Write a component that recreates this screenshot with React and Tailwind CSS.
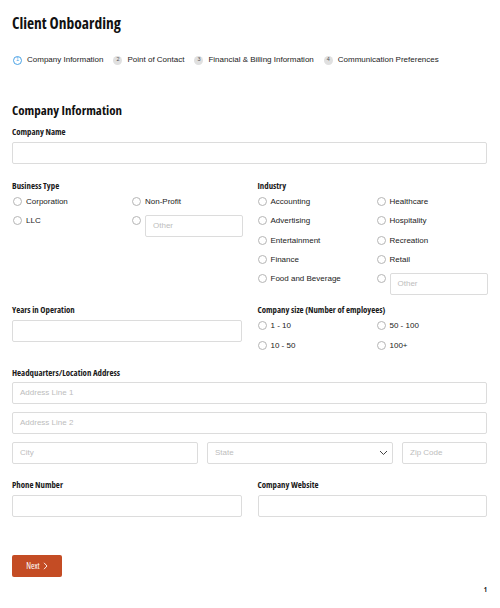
import React from "react";

const cond = "font-['Open_Sans',sans-serif] [font-stretch:75%] font-bold";
const body = "font-['Liberation_Sans',Arial,sans-serif]";

function Radio({ label }) {
  return (
    <div className="flex items-start h-[19.25px]">
      <span className="mt-[5px] w-[9px] h-[9px] rounded-full border border-[#b5b5b5] bg-white shrink-0" />
      <span className={`${body} ml-[4px] text-[8px] leading-[19px] text-[#222]`}>{label}</span>
    </div>
  );
}

function RadioOther() {
  return (
    <div className="flex items-start h-[19.25px]">
      <span className="mt-[5px] w-[9px] h-[9px] rounded-full border border-[#b5b5b5] bg-white shrink-0" />
      <div className={`${body} ml-[4px] w-[98px] h-[22px] border border-[#dcdcdc] rounded-[2px] bg-white text-[8px] text-[#bdbdbd] pl-[7px] flex items-center shrink-0 translate-y-[4px]`}>
        Other
      </div>
    </div>
  );
}

function Label({ children, className = "" }) {
  return <div className={`${cond} text-[8.8px] leading-[12px] text-[#1a1a1a] ${className}`}>{children}</div>;
}

function Input({ placeholder = "", className = "" }) {
  return (
    <div className={`${body} h-[22px] border border-[#dcdcdc] rounded-[2px] bg-white text-[8px] text-[#bdbdbd] pl-[7px] flex items-center ${className}`}>
      {placeholder}
    </div>
  );
}

function Step({ n, label, active }) {
  return (
    <div className="flex items-center">
      <span
        className={`${body} w-[9px] h-[9px] rounded-full flex items-center justify-center text-[5.5px] leading-none ${
          active ? "border border-[#4aa3e6] text-[#4aa3e6]" : "bg-[#e0e0e0] text-[#555]"
        }`}
      >
        {n}
      </span>
      <span className={`${body} ml-[5px] text-[8px] text-[#222] leading-[12px]`}>{label}</span>
    </div>
  );
}

export default function App() {
  return (
    <div className="w-[500px] h-[608px] bg-white pl-[12px] pr-[13px] relative overflow-hidden">
      <div className={`${cond} text-[15.5px] leading-[24px] text-[#111] pt-[11px]`}>Client Onboarding</div>

      <div className="flex items-center gap-[10px] mt-[19px] pl-[1px]">
        <Step n="1" label="Company Information" active />
        <Step n="2" label="Point of Contact" />
        <Step n="3" label="Financial & Billing Information" />
        <Step n="4" label="Communication Preferences" />
      </div>

      <div className={`${cond} text-[13px] leading-[18px] text-[#111] mt-[35px]`}>Company Information</div>

      <Label className="mt-[7px]">Company Name</Label>
      <Input className="mt-[4px]" />

      <div className="grid grid-cols-2 gap-x-[16px] mt-[16px]">
        <div>
          <Label>Business Type</Label>
          <div className="grid grid-cols-[119px_1fr] pl-[1px]">
            <Radio label="Corporation" />
            <Radio label="Non-Profit" />
            <Radio label="LLC" />
            <RadioOther />
          </div>
        </div>
        <div>
          <Label>Industry</Label>
          <div className="grid grid-cols-[119px_1fr] pb-[7px]">
            <Radio label="Accounting" />
            <Radio label="Healthcare" />
            <Radio label="Advertising" />
            <Radio label="Hospitality" />
            <Radio label="Entertainment" />
            <Radio label="Recreation" />
            <Radio label="Finance" />
            <Radio label="Retail" />
            <Radio label="Food and Beverage" />
            <RadioOther />
          </div>
        </div>
      </div>

      <div className="grid grid-cols-2 gap-x-[16px] mt-[9px]">
        <div>
          <Label>Years in Operation</Label>
          <Input className="mt-[4px]" />
        </div>
        <div>
          <Label>Company size (Number of employees)</Label>
          <div className="grid grid-cols-[119px_1fr]">
            <Radio label="1 - 10" />
            <Radio label="50 - 100" />
            <Radio label="10 - 50" />
            <Radio label="100+" />
          </div>
        </div>
      </div>

      <Label className="mt-[12px]">Headquarters/Location Address</Label>
      <Input className="mt-[3px]" placeholder="Address Line 1" />
      <Input className="mt-[8px]" placeholder="Address Line 2" />
      <div className="flex gap-[9px] mt-[8px]">
        <Input className="w-[186px]" placeholder="City" />
        <div className={`${body} w-[186px] h-[22px] border border-[#dcdcdc] rounded-[2px] bg-white text-[8px] text-[#bdbdbd] pl-[7px] pr-[4px] flex items-center justify-between`}>
          <span>State</span>
          <svg width="9" height="6" viewBox="0 0 9 6">
            <path d="M1 1 L4.5 4.5 L8 1" fill="none" stroke="#444" strokeWidth="1" />
          </svg>
        </div>
        <Input className="flex-1" placeholder="Zip Code" />
      </div>

      <div className="grid grid-cols-2 gap-x-[16px] mt-[15px]">
        <div>
          <Label>Phone Number</Label>
          <Input className="mt-[4px]" />
        </div>
        <div>
          <Label>Company Website</Label>
          <Input className="mt-[4px]" />
        </div>
      </div>

      <div className="mt-[38px] w-[50px] h-[22px] rounded-[2px] bg-[#c44c24] flex items-center justify-center gap-[3px] text-white">
        <span className="font-['Open_Sans',sans-serif] [font-stretch:75%] font-medium text-[8.5px] leading-none">Next</span>
        <svg width="5" height="8" viewBox="0 0 5 8">
          <path d="M1 0.8 L4 4 L1 7.2" fill="none" stroke="#fff" strokeWidth="0.9" />
        </svg>
      </div>

      <div className={`${cond} absolute right-[13px] top-[585px] text-[7px] text-[#222]`}>1</div>
    </div>
  );
}
